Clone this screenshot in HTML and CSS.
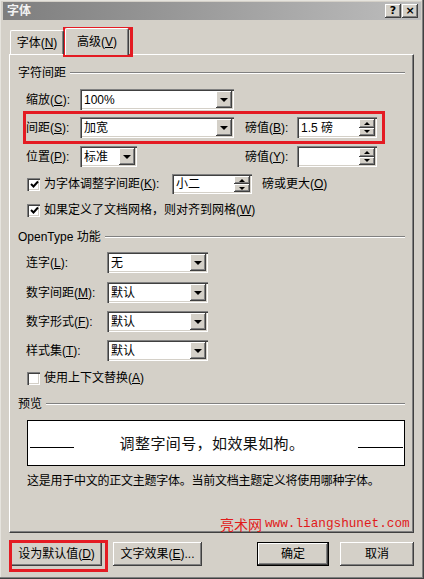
FILE: index.html
```html
<!DOCTYPE html>
<html lang="zh-CN">
<head>
<meta charset="utf-8">
<title>字体</title>
<link rel="stylesheet" href="styles.css">
</head>
<body>
<div class="window">
  <div class="titlebar">
    <span class="title">字体</span>
    <div class="tbtns"><span class="tbtn">?</span><span class="tbtn">×</span></div>
  </div>
  <div class="client">
    <div class="tabs">
      <div class="tab">字体(<u>N</u>)</div>
      <div class="tab active">高级(<u>V</u>)</div>
    </div>
    <div class="panel">
      <div class="ghead gh1"><span>字符间距</span><i class="etch"></i></div>

      <div class="grow r1">
        <span class="lbl">缩放(<u>C</u>):</span>
        <div class="combo"><span class="val">100%</span><span class="drop"><b class="tri"></b></span></div>
      </div>
      <div class="grow r2">
        <span class="lbl">间距(<u>S</u>):</span>
        <div class="combo"><span class="val">加宽</span><span class="drop"><b class="tri"></b></span></div>
        <span></span>
        <span class="lbl">磅值(<u>B</u>):</span>
        <div class="spin"><span class="val">1.5 磅</span><span class="spbtns"><span class="sp"><b class="up"></b></span><span class="sp"><b class="dn"></b></span></span></div>
      </div>
      <div class="grow r3">
        <span class="lbl">位置(<u>P</u>):</span>
        <div class="combo small"><span class="val">标准</span><span class="drop"><b class="tri"></b></span></div>
        <span></span>
        <span class="lbl">磅值(<u>Y</u>):</span>
        <div class="spin"><span class="val"></span><span class="spbtns"><span class="sp"><b class="up"></b></span><span class="sp"><b class="dn"></b></span></span></div>
      </div>

      <div class="cbrow c1">
        <span class="chk on"><svg width="9" height="9" viewBox="0 0 9 9"><path d="M1 4 L3.5 6.5 L8 1.5" fill="none" stroke="#000" stroke-width="2"/></svg></span>
        <span class="cblbl wide">为字体调整字间距(<u>K</u>):</span>
        <div class="spin kern"><span class="val">小二</span><span class="spbtns"><span class="sp"><b class="up"></b></span><span class="sp"><b class="dn"></b></span></span></div>
        <span class="after">磅或更大(<u>O</u>)</span>
      </div>
      <div class="cbrow c2">
        <span class="chk on"><svg width="9" height="9" viewBox="0 0 9 9"><path d="M1 4 L3.5 6.5 L8 1.5" fill="none" stroke="#000" stroke-width="2"/></svg></span>
        <span class="cblbl">如果定义了文档网格，则对齐到网格(<u>W</u>)</span>
      </div>

      <div class="ghead gh2"><span>OpenType 功能</span><i class="etch"></i></div>

      <div class="orow o1">
        <span class="lbl">连字(<u>L</u>):</span>
        <div class="combo"><span class="val">无</span><span class="drop"><b class="tri"></b></span></div>
      </div>
      <div class="orow o2">
        <span class="lbl">数字间距(<u>M</u>):</span>
        <div class="combo"><span class="val">默认</span><span class="drop"><b class="tri"></b></span></div>
      </div>
      <div class="orow o3">
        <span class="lbl">数字形式(<u>F</u>):</span>
        <div class="combo"><span class="val">默认</span><span class="drop"><b class="tri"></b></span></div>
      </div>
      <div class="orow o4">
        <span class="lbl">样式集(<u>T</u>):</span>
        <div class="combo"><span class="val">默认</span><span class="drop"><b class="tri"></b></span></div>
      </div>

      <div class="cbrow c3">
        <span class="chk"></span>
        <span class="cblbl">使用上下文替换(<u>A</u>)</span>
      </div>

      <div class="ghead gh3"><span>预览</span><i class="etch"></i></div>

      <div class="preview">
        <i class="pline"></i>
        <span class="ptext">调整字间号，如效果如枸。</span>
        <i class="pline right"></i>
      </div>
      <div class="desc">这是用于中文的正文主题字体。当前文档主题定义将使用哪种字体。</div>

      <div class="watermark"><span class="wm-cn">亮术网</span> <span class="wm-en">www.liangshunet.com</span></div>
    </div>

    <div class="btnrow">
      <div class="btngroup">
        <span class="btn bdef">设为默认值(<u>D</u>)</span>
        <span class="btn beff">文字效果(<u>E</u>)...</span>
      </div>
      <div class="btngroup">
        <span class="btn bok">确定</span>
        <span class="btn bcancel">取消</span>
      </div>
    </div>
  </div>

  <div class="mark m-tab"></div>
  <div class="mark m-spacing"></div>
  <div class="mark m-default"></div>
</div>
</body>
</html>
```

FILE: styles.css
```css
* { box-sizing: border-box; }
html, body { margin: 0; padding: 0; }
body {
  width: 424px;
  height: 579px;
  overflow: hidden;
  background: #d4d0c8;
  font-family: "Liberation Sans", "Noto Sans CJK SC", sans-serif;
  font-size: 12px;
  color: #000;
}
u { text-decoration: underline; text-underline-offset: 1px; }

.window {
  position: relative;
  width: 424px;
  height: 579px;
  padding: 2px 3px 3px 3px;
  background: #d4d0c8;
  box-shadow: inset -1px -1px #404040, inset -2px -2px #808080, inset 1px 1px #e6e4de;
}

/* title bar */
.titlebar {
  height: 18px;
  display: flex;
  align-items: center;
  justify-content: space-between;
  padding: 0 3px 0 4px;
  background: linear-gradient(to right, #7e7e7e, #bdbdbd);
}
.title { color: #f2f2f2; font-size: 12px; font-weight: bold; line-height: 14px; }
.tbtns { display: flex; gap: 1px; }
.tbtn {
  width: 16px; height: 14px;
  display: flex; align-items: center; justify-content: center;
  background: #d4d0c8;
  box-shadow: inset -1px -1px #404040, inset 1px 1px #fff, inset -2px -2px #808080;
  font-family: "DejaVu Sans", sans-serif;
  font-weight: bold; font-size: 11px; line-height: 12px;
}

/* client area */
.client { padding: 0 7px 0 6px; }

.tabs {
  margin-top: 8px;
  height: 27px;
  margin-bottom: -1px;
  display: flex;
  align-items: flex-end;
  position: relative;
  z-index: 1;
}
.tab {
  height: 24px;
  margin-bottom: 1px;
  width: 54px;
  margin-left: 1px;
  display: flex; align-items: center; justify-content: center;
  background: #d4d0c8;
  border-top: 1px solid #fff;
  border-left: 1px solid #fff;
  border-right: 1px solid #404040;
  border-radius: 2px 2px 0 0;
  box-shadow: inset -1px 0 #808080;
  line-height: 14px;
}
.tab.active {
  height: 27px;
  margin-bottom: 0;
  width: 64px;
  margin-left: 1px;
  padding-bottom: 1px;
}

.panel {
  width: 405px;
  height: 479px;
  padding: 0 8px;
  background: #d4d0c8;
  border-top: 1px solid #fff;
  border-left: 1px solid #fff;
  border-right: 1px solid #404040;
  border-bottom: 1px solid #404040;
  box-shadow: inset -1px -1px #808080;
}

.ghead {
  height: 18px;
  display: flex;
  align-items: center;
  line-height: 14px;
}
.etch {
  flex: 1;
  height: 2px;
  margin-left: 4px;
  border-top: 1px solid #808080;
  border-bottom: 1px solid #fff;
}
.gh1 { margin-top: 9px; }
.gh2 { margin-top: 9px; }
.gh3 { margin-top: 8px; }

.lbl { line-height: 14px; white-space: nowrap; }

.grow {
  margin-left: 8px;
  height: 21px;
  display: grid;
  grid-template-columns: 54px 154px 11px 52px 80px;
  align-items: center;
}
.r1 { margin-top: 7px; }
.r2 { margin-top: 7px; }
.r3 { margin-top: 8px; }

.combo, .spin {
  height: 21px;
  display: flex;
  align-items: stretch;
  background: #fff;
  padding: 2px;
  box-shadow: inset 1px 1px #808080, inset 2px 2px #404040, inset -1px -1px #fff, inset -2px -2px #d4d0c8;
}
.combo.small { width: 57px; }
.val { flex: 1; display: flex; align-items: center; padding-left: 2px; line-height: 14px; white-space: nowrap; }
.drop {
  width: 16px;
  display: flex; align-items: center; justify-content: center;
  background: #d4d0c8;
  box-shadow: inset -1px -1px #404040, inset 1px 1px #fff, inset -2px -2px #808080;
}
.tri {
  width: 0; height: 0;
  border-left: 4px solid transparent;
  border-right: 4px solid transparent;
  border-top: 4px solid #000;
  margin-top: 1px;
}
.spbtns { width: 16px; display: flex; flex-direction: column; }
.sp {
  flex: 1;
  display: flex; align-items: center; justify-content: center;
  background: #d4d0c8;
  box-shadow: inset -1px -1px #404040, inset 1px 1px #fff, inset -2px -2px #808080;
}
.up, .dn { width: 0; height: 0; border-left: 3px solid transparent; border-right: 3px solid transparent; }
.up { border-bottom: 3px solid #000; }
.dn { border-top: 3px solid #000; }

.cbrow {
  margin-left: 9px;
  height: 18px;
  display: flex;
  align-items: center;
  line-height: 14px;
}
.c1 { margin-top: 7px; height: 20px; }
.c2 { margin-top: 7px; }
.c3 { margin-top: 8px; }
.chk {
  width: 13px; height: 13px;
  margin-right: 4px;
  display: flex; align-items: center; justify-content: center;
  background: #fff;
  box-shadow: inset 1px 1px #808080, inset 2px 2px #404040, inset -1px -1px #fff, inset -2px -2px #d4d0c8;
}
.chk svg { display: block; margin: 1px 0 0 1px; }
.cblbl { white-space: nowrap; }
.cblbl.wide { width: 128px; }
.spin.kern { width: 80px; height: 20px; }
.after { margin-left: 10px; white-space: nowrap; }

.orow {
  margin-left: 8px;
  height: 21px;
  display: grid;
  grid-template-columns: 81px 101px;
  align-items: center;
}
.o1 { margin-top: 6px; }
.o2 { margin-top: 9px; }
.o3 { margin-top: 8px; }
.o4 { margin-top: 8px; }

.preview {
  margin-top: 7px;
  margin-left: 9px;
  width: 378px;
  height: 46px;
  background: #fff;
  border: 1px solid #000;
  display: flex;
  align-items: center;
  justify-content: space-between;
  padding: 0 1px 0 2px;
}
.pline { width: 44px; height: 1px; background: #000; margin-top: 9px; }
.pline.right { width: 45px; }
.ptext {
  font-family: "Noto Sans CJK SC", sans-serif;
  font-size: 15px;
  letter-spacing: 0.4px;
  line-height: 18px;
  margin-right: 8px;
  color: #111;
}

.desc {
  margin-top: 6px;
  margin-left: 9px;
  height: 18px;
  display: flex;
  align-items: center;
  line-height: 14px;
  letter-spacing: -0.25px;
  white-space: nowrap;
}

.watermark {
  margin-top: 25px;
  margin-left: 202px;
  height: 18px;
  display: flex;
  align-items: center;
  color: #e01a1a;
  white-space: nowrap;
}
.wm-cn { font-family: "Noto Sans CJK SC", sans-serif; font-size: 14px; line-height: 16px; }
.wm-en { font-family: "Liberation Mono", monospace; font-size: 12.7px; line-height: 16px; margin-left: 3px; }

/* buttons */
.btnrow {
  margin-top: 9px;
  display: flex;
  justify-content: space-between;
}
.btngroup { display: flex; gap: 11px; }
.btn {
  height: 24px;
  display: flex; align-items: center; justify-content: center;
  background: #d4d0c8;
  box-shadow: inset -1px -1px #404040, inset 1px 1px #fff, inset -2px -2px #808080;
  line-height: 14px;
  white-space: nowrap;
}
.bdef { width: 91px; margin-left: 2px; }
.beff { width: 89px; }
.bok {
  width: 72px;
  border: 1px solid #000;
  box-shadow: inset -1px -1px #404040, inset 1px 1px #fff, inset -2px -2px #808080;
}
.bcancel { width: 74px; }

/* red annotation boxes drawn over the dialog */
.mark { position: absolute; border: 3px solid #e41b23; pointer-events: none; }
.m-tab { left: 63px; top: 27px; width: 70px; height: 30px; }
.m-spacing { left: 23px; top: 111px; width: 362px; height: 33px; }
.m-default { left: 9px; top: 540px; width: 99px; height: 32px; }
```
